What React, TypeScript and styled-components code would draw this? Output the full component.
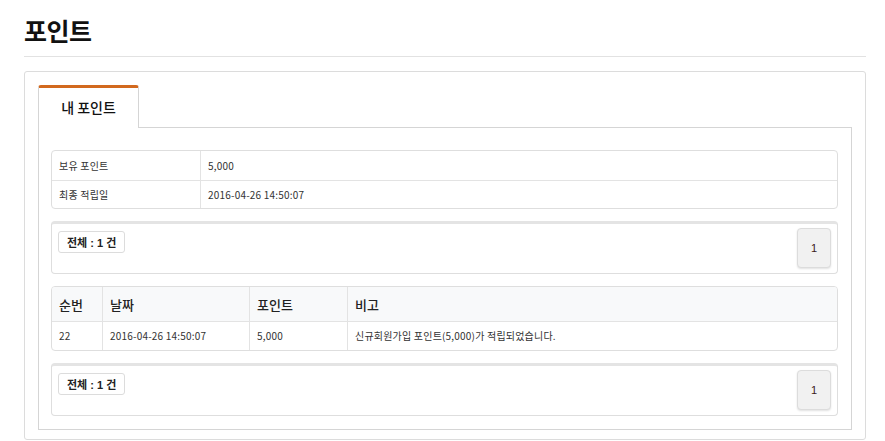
import React from "react";
import styled, { createGlobalStyle } from "styled-components";

const Global = createGlobalStyle`
  html, body { margin: 0; padding: 0; background: #fff; }
  body { font-family: "Noto Sans CJK KR", "Noto Sans", sans-serif; color: #222; }
  * { box-sizing: border-box; }
`;

const Page = styled.div`
  padding: 13px 19px 0 24px;
`;

const Title = styled.h1`
  margin: 0;
  font-size: 25px;
  font-weight: 700;
  line-height: 34px;
  color: #111;
  letter-spacing: -0.5px;
  padding-bottom: 9px;
  border-bottom: 1px solid #e2e2e2;
`;

const Panel = styled.div`
  margin-top: 14px;
  border: 1px solid #dcdcdc;
  border-radius: 3px;
  padding: 13px 13px 12px 13px;
  height: 369px;
`;

const TabBar = styled.div`
  display: flex;
  border-bottom: 1px solid #d5d5d5;
`;

const Tab = styled.div`
  width: 101px;
  height: 43px;
  border: 1px solid #d5d5d5;
  border-top: 3px solid #d2691e;
  border-bottom: none;
  border-radius: 3px 3px 0 0;
  margin-bottom: -1px;
  background: #fff;
  font-size: 14px;
  font-weight: 500;
  color: #111;
  display: flex;
  align-items: center;
  justify-content: center;
  padding-bottom: 2px;
`;

const TabBody = styled.div`
  border: 1px solid #d5d5d5;
  border-top: none;
  padding: 22px 13px 13px 12px;
  display: flex;
  flex-direction: column;
  gap: 12px;
`;

const Table = styled.table`
  width: 100%;
  border-collapse: separate;
  border-spacing: 0;
  border: 1px solid #dedede;
  border-radius: 4px;
  overflow: hidden;
  font-size: 10px;
  color: #333;
`;

const Cell = styled.td<{ $w?: number; $first?: boolean; $top?: boolean }>`
  ${(p) => (p.$w ? `width: ${p.$w}px;` : "")}
  height: 28.5px;
  padding: 0 7px;
  border-left: ${(p) => (p.$first ? "none" : "1px solid #e3e3e3")};
  border-top: ${(p) => (p.$top ? "none" : "1px solid #e3e3e3")};
  vertical-align: middle;
  white-space: nowrap;
  letter-spacing: 0.2px;
`;

const Head = styled.th<{ $w?: number; $first?: boolean }>`
  ${(p) => (p.$w ? `width: ${p.$w}px;` : "")}
  height: 34px;
  padding: 0 7px;
  text-align: left;
  font-size: 13px;
  font-weight: 500;
  color: #222;
  background: #f8f9fa;
  border-left: ${(p) => (p.$first ? "none" : "1px solid #e3e3e3")};
  white-space: nowrap;
`;

const Pager = styled.div`
  height: 53px;
  border: 1px solid #dedede;
  border-top: 3px solid #e4e4e4;
  border-radius: 4px;
  display: flex;
  align-items: flex-start;
  justify-content: space-between;
  padding: 4px 6px 0 6px;
`;

const Count = styled.span`
  height: 22px;
  margin-top: 3px;
  padding: 0 8px;
  border: 1px solid #dcdcdc;
  border-radius: 3px;
  font-size: 11px;
  font-weight: 700;
  color: #222;
  display: inline-flex;
  align-items: center;
  font-family: "Liberation Sans", "Noto Sans CJK KR", sans-serif;
`;

const PageBtn = styled.span`
  width: 34px;
  height: 40px;
  border: 1px solid #dcdcdc;
  border-radius: 4px;
  background: #f1f1f1;
  box-shadow: 0 1px 2px rgba(0, 0, 0, 0.12);
  font-size: 11px;
  font-family: "Liberation Sans", sans-serif;
  color: #3a1a1a;
  display: inline-flex;
  align-items: center;
  justify-content: center;
`;

function Pagination() {
  return (
    <Pager>
      <Count>전체 : 1 건</Count>
      <PageBtn>1</PageBtn>
    </Pager>
  );
}

export default function App() {
  return (
    <>
      <Global />
      <Page>
        <Title>포인트</Title>
        <Panel>
          <TabBar>
            <Tab>내 포인트</Tab>
          </TabBar>
          <TabBody>
            <Table>
              <tbody>
                <tr>
                  <Cell $w={148} $first $top>보유 포인트</Cell>
                  <Cell $top>5,000</Cell>
                </tr>
                <tr>
                  <Cell $first>최종 적립일</Cell>
                  <Cell>2016-04-26 14:50:07</Cell>
                </tr>
              </tbody>
            </Table>
            <Pagination />
            <Table>
              <thead>
                <tr>
                  <Head $w={50} $first>순번</Head>
                  <Head $w={147}>날짜</Head>
                  <Head $w={98}>포인트</Head>
                  <Head>비고</Head>
                </tr>
              </thead>
              <tbody>
                <tr>
                  <Cell $first>22</Cell>
                  <Cell>2016-04-26 14:50:07</Cell>
                  <Cell>5,000</Cell>
                  <Cell>신규회원가입 포인트(5,000)가 적립되었습니다.</Cell>
                </tr>
              </tbody>
            </Table>
            <Pagination />
          </TabBody>
        </Panel>
      </Page>
    </>
  );
}
